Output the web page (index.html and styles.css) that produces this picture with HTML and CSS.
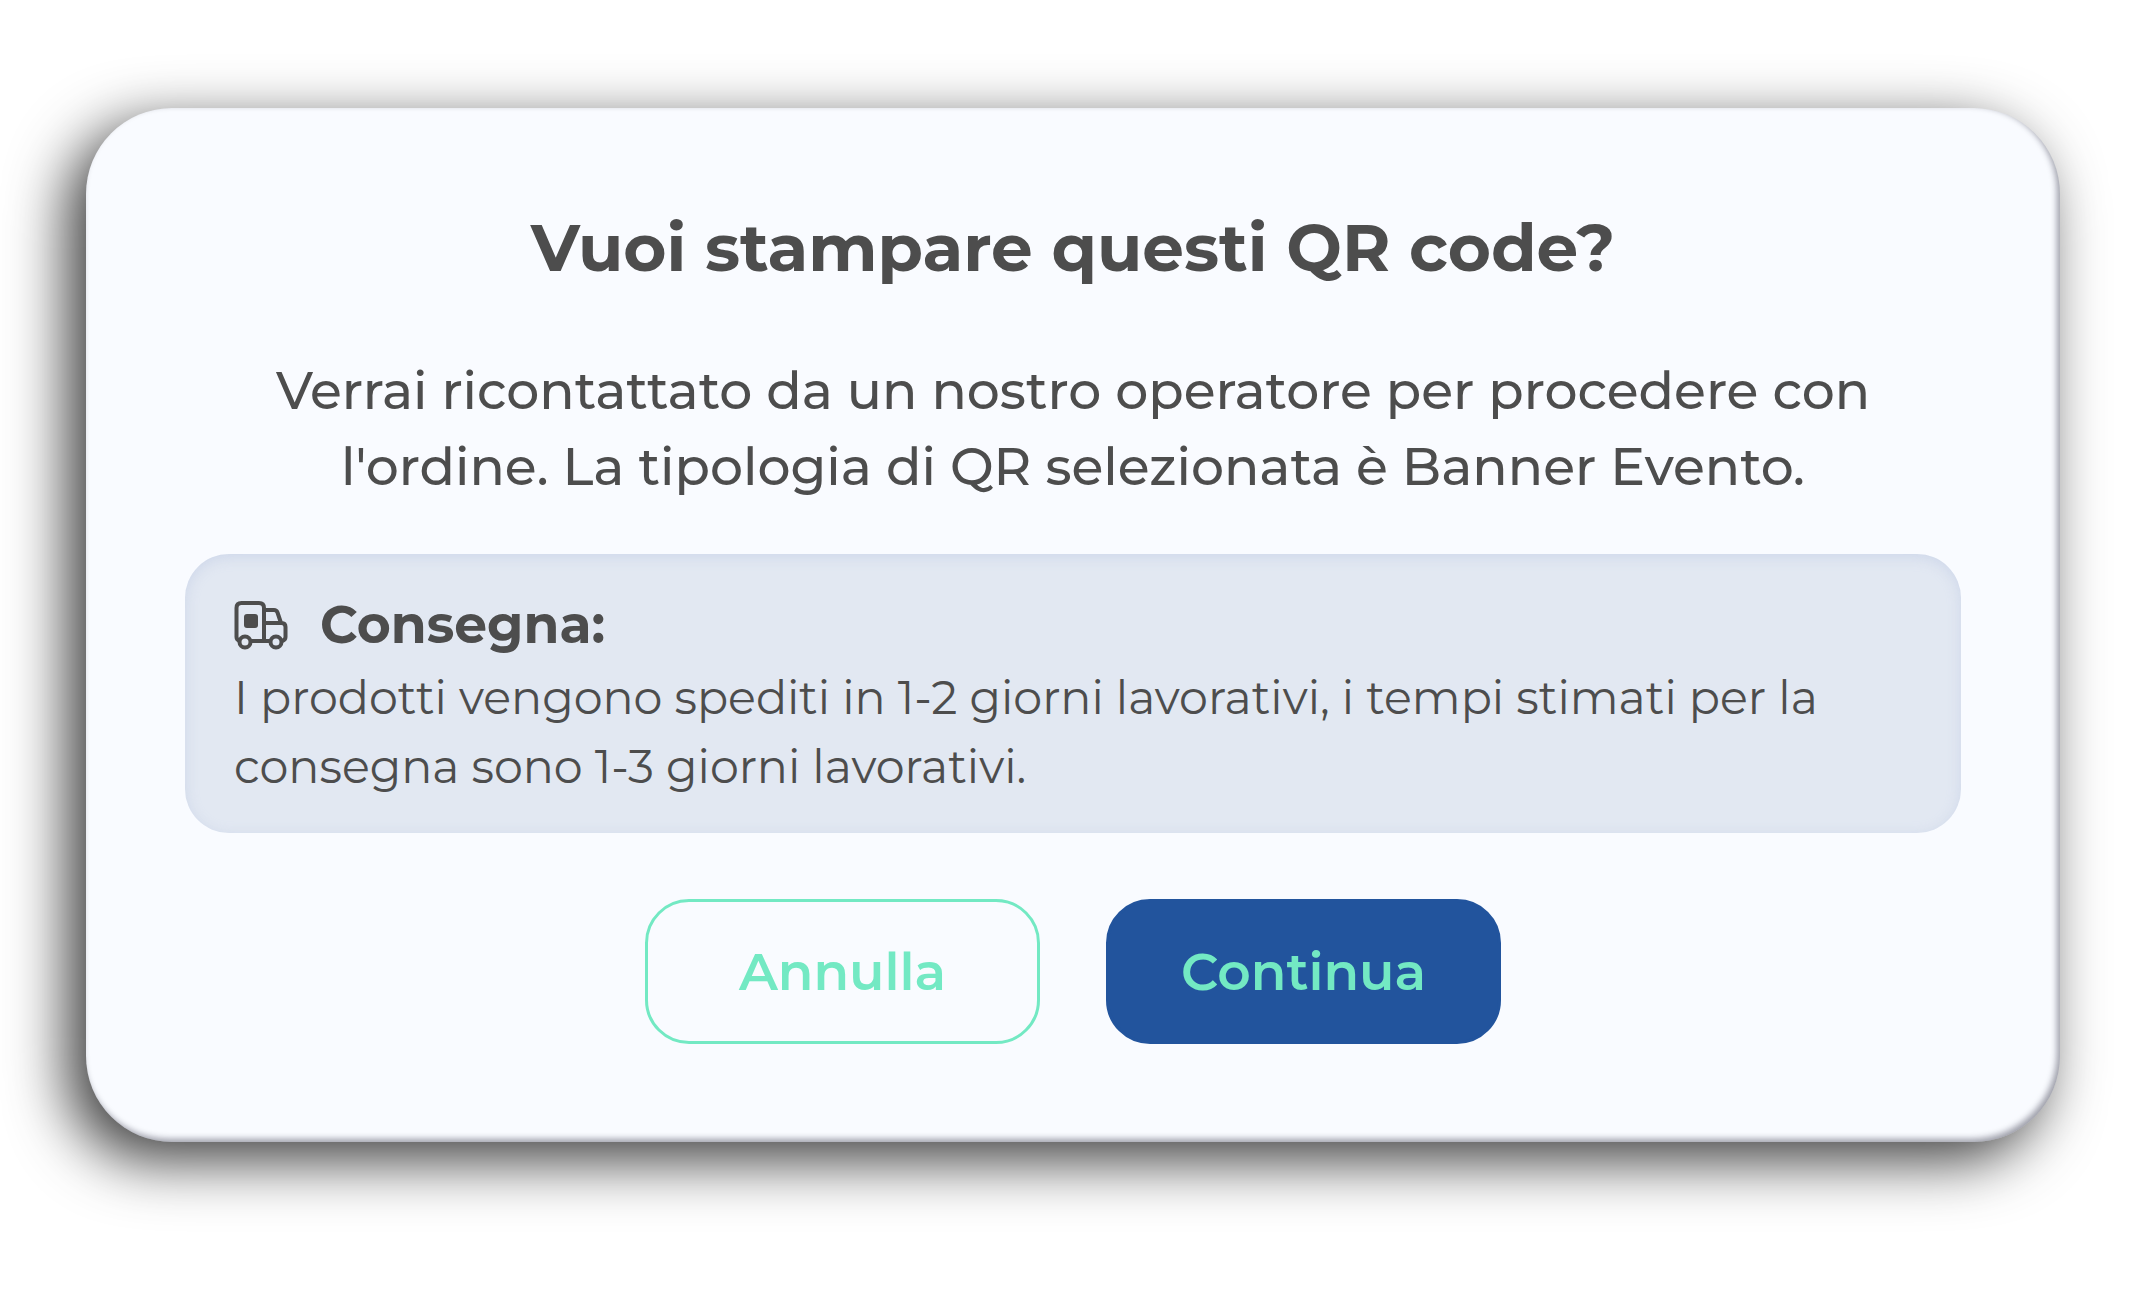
FILE: index.html
```html
<!DOCTYPE html>
<html lang="it">
<head>
  <meta charset="utf-8">
  <meta name="viewport" content="width=device-width, initial-scale=1">
  <title>Stampa QR code</title>
  <link rel="stylesheet" href="styles.css">
</head>
<body>
  <main class="dialog" role="dialog" aria-labelledby="dialog-title" aria-describedby="dialog-text">
    <h1 class="dialog-title" id="dialog-title">Vuoi stampare questi QR code?</h1>
    <p class="dialog-text" id="dialog-text">Verrai ricontattato da un nostro operatore per procedere con<br>l'ordine. La tipologia di QR selezionata è Banner Evento.</p>
    <section class="delivery">
      <h2 class="delivery-title">
        <svg class="delivery-icon" viewBox="0 0 54 50" fill="none" stroke="currentColor" stroke-width="4" stroke-linejoin="round" aria-hidden="true">
          <path d="M6 41Q2.500 40 2.500 37V8Q2.500 3 7.500 3H25Q30 3 30 8V41M17 41H37M48 41Q51.500 40 51.500 37V27Q51.500 23 47.500 23H30M30 10H40Q42.500 10 43.500 12.500L47 23"/>
          <rect x="10" y="14" width="14" height="14" rx="3" fill="currentColor" stroke="none"/>
          <circle cx="11" cy="42" r="5.500"/>
          <circle cx="42" cy="42" r="5.500"/>
        </svg>
        Consegna:
      </h2>
      <p class="delivery-text">I prodotti vengono spediti in 1-2 giorni lavorativi, i tempi stimati per la<br>consegna sono 1-3 giorni lavorativi.</p>
    </section>
    <div class="actions">
      <button class="button button-outline" type="button">Annulla</button>
      <button class="button button-primary" type="button">Continua</button>
    </div>
  </main>
</body>
</html>
```
FILE: styles.css
```css
* {
  box-sizing: border-box;
}

body {
  margin: 0;
  padding: 108px 92px 108px 86px;
  background: #fff;
  color: #4d4d4d;
  font-family: Montserrat, Inter, sans-serif;
}

.dialog {
  padding: 98px 99px;
  border-radius: 86px;
  background: #f9fbff;
  box-shadow:
    -18px 18px 60px rgba(0, 0, 0, 0.77),
    inset -3px -3px 6px rgba(20, 20, 40, 0.4);
}

.dialog-title {
  margin: 0 0 63px;
  font-size: 66px;
  font-weight: 700;
  line-height: 84px;
  text-align: center;
}

.dialog-text {
  margin: 0 0 49px;
  font-size: 52px;
  font-weight: 500;
  line-height: 76px;
  text-align: center;
}

.delivery {
  padding: 32px 49px;
  border-radius: 44px;
  background: #e2e8f2;
  box-shadow: inset 0 3px 14px rgba(160, 175, 215, 0.3);
}

.delivery-title {
  display: flex;
  align-items: center;
  gap: 32px;
  margin: 0;
  font-size: 52px;
  font-weight: 700;
  line-height: 77px;
}

.delivery-icon {
  width: 54px;
  height: 50px;
}

.delivery-text {
  margin: 0;
  font-size: 46px;
  font-weight: 400;
  line-height: 69px;
}

.actions {
  display: flex;
  justify-content: center;
  gap: 66px;
  margin-top: 66px;
}

.button {
  width: 395px;
  height: 145px;
  border: 3px solid #73e9c3;
  border-radius: 44px;
  background: transparent;
  color: #73e9c3;
  font: inherit;
  font-size: 52px;
  font-weight: 600;
}

.button-primary {
  border-color: #22549d;
  background: #22549d;
}
```
